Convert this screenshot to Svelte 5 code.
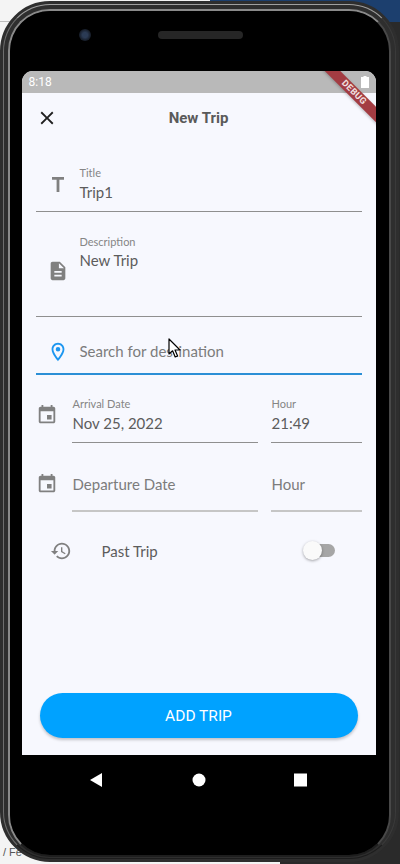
<script>
  const icons = {
    close: 'M19 6.41L17.59 5 12 10.59 6.41 5 5 6.41 10.59 12 5 17.59 6.41 19 12 13.41 17.59 19 19 17.59 13.41 12z',
    title: 'M6 4v2.8h4.6V19h2.8V6.8H18V4z',
    doc: 'M14 2H6c-1.1 0-1.99.9-1.99 2L4 20c0 1.1.89 2 1.99 2H18c1.1 0 2-.9 2-2V8l-6-6zm2 16H8v-2h8v2zm0-4H8v-2h8v2zm-3-5V3.5L18.5 9H13z',
    pin: 'M12 2C8.13 2 5 5.13 5 9c0 5.25 7 13 7 13s7-7.75 7-13c0-3.87-3.13-7-7-7zM7 9c0-2.76 2.24-5 5-5s5 2.24 5 5c0 2.88-2.88 7.19-5 9.88C9.92 16.21 7 11.85 7 9zm5-2.5a2.5 2.5 0 1 0 0 5 2.5 2.5 0 0 0 0-5z',
    event: 'M17 12h-5v5h5v-5zM16 1v2H8V1H6v2H5c-1.11 0-1.99.9-1.99 2L3 19c0 1.1.89 2 2 2h14c1.1 0 2-.9 2-2V5c0-1.1-.9-2-2-2h-1V1h-2zm3 18H5V8h14v11z',
    history: 'M13 3c-4.97 0-9 4.03-9 9H1l3.89 3.89.07.14L9 12H6c0-3.87 3.13-7 7-7s7 3.13 7 7-3.13 7-7 7c-1.93 0-3.68-.79-4.94-2.06l-1.42 1.42C8.27 19.99 10.51 21 13 21c4.97 0 9-4.03 9-9s-4.03-9-9-9zm-1 5v5l4.28 2.54.72-1.21-3.5-2.08V8H12z'
  };
</script>

<div class="stage">
  <div class="backdrop-top"></div>
  <div class="backdrop-line"></div>
  <div class="backdrop-right"></div>
  <div class="backdrop-bottom"></div>
  <span class="backdrop-text">/ Fe</span>

  <div class="phone">
    <div class="shell">
      <div class="ring">
        <div class="face">
          <div class="earpiece">
            <span class="camera"></span>
            <span class="speaker"></span>
          </div>

          <div class="screen">
            <div class="status">
              <span class="clock">8:18</span>
              <svg class="battery" width="8" height="12" viewBox="0 0 8 12"><path d="M2.5 0h3v1H8v11H0V1h2.5z" fill="#fff" /></svg>
            </div>

            <div class="ribbon">DEBUG</div>

            <header class="bar">
              <svg class="close" width="22" height="22" viewBox="0 0 24 24"><path d={icons.close} /></svg>
              <h1>New Trip</h1>
            </header>

            <form class="form">
              <div class="field title">
                <div class="slot"><svg class="ico" width="24" height="24" viewBox="0 0 24 24"><path d={icons.title} /></svg></div>
                <div class="text"><span class="label">Title</span><span class="value">Trip1</span></div>
              </div>

              <div class="field desc">
                <div class="slot"><svg class="ico" width="22" height="22" viewBox="0 0 24 24"><path d={icons.doc} /></svg></div>
                <div class="text"><span class="label">Description</span><span class="value up">New Trip</span></div>
              </div>

              <div class="field search">
                <div class="slot"><svg class="ico blue" width="22" height="22" viewBox="0 0 24 24"><path d={icons.pin} /></svg></div>
                <div class="text"><span class="value hint">Search for destination</span></div>
              </div>

              <div class="dates arrival">
                <div class="dslot"><svg class="ico" width="22" height="22" viewBox="0 0 24 24"><path d={icons.event} /></svg></div>
                <div class="cell wide"><span class="label">Arrival Date</span><span class="value">Nov 25, 2022</span></div>
                <div class="cell narrow"><span class="label">Hour</span><span class="value">21:49</span></div>
              </div>

              <div class="dates departure">
                <div class="dslot"><svg class="ico" width="22" height="22" viewBox="0 0 24 24"><path d={icons.event} /></svg></div>
                <div class="cell wide"><span class="value hint">Departure Date</span></div>
                <div class="cell narrow"><span class="value hint">Hour</span></div>
              </div>

              <div class="past">
                <svg class="ico" width="22" height="22" viewBox="0 0 24 24"><path d={icons.history} /></svg>
                <span class="past-label">Past Trip</span>
                <span class="switch"><span class="thumb"></span></span>
              </div>
            </form>

            <button class="add" type="button">ADD TRIP</button>
          </div>

          <svg class="nav" width="354" height="30" viewBox="0 0 354 30">
            <path d="M68 9l12-7v14z" fill="#fff" />
            <circle cx="177" cy="9" r="6.5" fill="#fff" />
            <rect x="272" y="2.5" width="13" height="13" fill="#fff" />
          </svg>
        </div>
      </div>
    </div>
  </div>

  <svg class="cursor" width="14" height="21" viewBox="0 0 14 21">
    <path d="M1 1v15l3.6-3.2 2.6 6.2 2.4-1-2.6-6H12z" fill="#fff" stroke="#000" stroke-width="1.2" stroke-linejoin="round" />
  </svg>
</div>

<style>
  :global(html), :global(body) { margin: 0; background: #f4f4f4; overflow: hidden; }

  .stage {
    position: relative;
    width: 400px;
    height: 864px;
    overflow: hidden;
    background: #f4f4f4;
    font-family: "Lato", "Open Sans", sans-serif;
    padding: 1px 1px 0 0;
    box-sizing: border-box;
  }
  .backdrop-top { position: absolute; left: 210px; top: 0; right: 0; height: 22px; background: #1c3f6e; }
  .backdrop-line { position: absolute; left: 0; top: 21px; width: 30px; height: 1px; background: #bdbdbd; }
  .backdrop-right { position: absolute; left: 380px; top: 22px; right: 0; bottom: 0; background: #2a2a2a; }
  .backdrop-bottom { position: absolute; left: 280px; top: 800px; right: 0; bottom: 0; background: #2a2a2a; }
  .backdrop-text { position: absolute; left: 3px; top: 846px; font: 11px "Liberation Sans", sans-serif; color: #555; }

  .phone {
    position: relative;
    height: 861px;
    box-sizing: border-box;
    border: 3px solid #2e2e2e;
    border-radius: 50px;
    background: #2e2e2e;
  }
  .shell {
    height: 100%;
    box-sizing: border-box;
    padding: 3.5px 4px 1px 3.5px;
    border: 1.5px solid;
    border-color: #a0a0a0 #3a3a3a #1c1c1c #6e6e6e;
    border-radius: 47px;
  }
  .ring {
    height: 100%;
    box-sizing: border-box;
    border: 2px solid;
    border-color: #8a8a8a #484848 #1e1e1e #8a8a8a;
    border-radius: 42px;
    overflow: hidden;
    background: #000;
  }
  .face { height: 100%; background: #000; display: flex; flex-direction: column; padding-left: 12px; }

  .earpiece {
    height: 60px;
    box-sizing: border-box;
    padding: 18px 0 0 57px;
    display: flex;
    align-items: flex-start;
    flex: none;
  }
  .camera {
    width: 12px; height: 12px; border-radius: 50%;
    background: radial-gradient(circle, #2b3b55 0 30%, #1a2230 60%, #10141c 100%);
    margin-right: 67px;
  }
  .speaker { width: 85px; height: 8px; margin-top: 2px; border-radius: 4px; background: #262626; }

  .screen {
    position: relative;
    width: 354px;
    height: 684px;
    flex: none;
    overflow: hidden;
    display: flex;
    flex-direction: column;
    border-radius: 11px 11px 0 0;
    background: #f7f8fe;
  }
  .status {
    height: 22px;
    flex: none;
    background: #b9b9b9;
    display: flex;
    align-items: center;
    justify-content: space-between;
    padding: 0 7px;
    box-sizing: border-box;
  }
  .clock { font: 12px "Roboto", sans-serif; color: #fff; }
  .battery { margin-top: 1px; }

  .ribbon {
    position: absolute;
    left: 282px;
    top: 16px;
    width: 100px;
    height: 11px;
    text-align: center;
    transform: rotate(45deg);
    background: #a33c42;
    color: #f3e3e3;
    font: 700 9px/11px "Roboto", sans-serif;
    letter-spacing: 0.4px;
    box-shadow: 0 1px 3px rgba(0,0,0,.25);
  }

  .bar {
    position: relative;
    height: 50px;
    flex: none;
    display: flex;
    align-items: center;
    justify-content: center;
  }
  .close { position: absolute; left: 14px; top: 14px; fill: #1f1f1f; }
  h1 { margin: 0; font: 700 15px "Roboto", sans-serif; color: #5a5a5a; }

  .form { padding: 0 14px; display: flex; flex-direction: column; }
  .field { display: flex; border-bottom: 1px solid #8f8f8f; }
  .slot { width: 44px; flex: none; display: flex; justify-content: center; }
  .text, .cell { display: flex; flex-direction: column; }
  .ico { fill: #808080; display: block; }
  .ico.blue { fill: #1c96f0; }

  .label { font-size: 11px; line-height: 14px; color: #858585; margin-bottom: 2px; }
  .value { font-size: 15px; line-height: 20px; color: #5c5c5c; }
  .value.up { margin-top: -1px; }
  .hint { color: #7c7c7c; }

  .title { margin-top: 23px; padding-bottom: 9px; }
  .title .ico { margin-top: 7px; }
  .desc { margin-top: 23px; padding-bottom: 34px; }
  .desc .ico { margin-top: 25px; }
  .search { margin-top: 24px; padding-bottom: 10px; border-bottom: 2px solid #2b8fd6; }

  .dates { display: flex; gap: 13px; }
  .dslot { width: 36px; flex: none; margin-right: -13px; }
  .cell { border-bottom: 1px solid #8f8f8f; padding-bottom: 9px; box-sizing: border-box; padding-left: 1px; }
  .wide { width: 186px; }
  .narrow { width: 91px; }
  .arrival { margin-top: 22px; }
  .arrival .ico { margin-top: 7px; }
  .departure { margin-top: 31px; }
  .departure .ico { margin-top: -1px; }
  .departure .cell { padding-bottom: 16px; border-bottom: 2px solid #c6c6c6; }

  .past { margin-top: 29px; display: flex; align-items: center; height: 20px; padding-left: 14px; }
  .past-label { margin-left: 30px; font-size: 15px; line-height: 20px; color: #5c5c5c; }
  .switch {
    position: relative;
    width: 30px; height: 13px;
    margin-left: auto;
    margin-right: 27px;
    border-radius: 7px;
    background: #a6a6a6;
  }
  .thumb {
    position: absolute;
    left: -2px; top: -3px;
    width: 19px; height: 19px;
    border-radius: 50%;
    background: #fafafa;
    box-shadow: 0 1px 3px rgba(0,0,0,.35);
  }

  .add {
    margin: auto 18px 17px;
    height: 45px;
    padding-top: 3px;
    flex: none;
    border: 0;
    border-radius: 23px;
    background: #00a2ff;
    color: #fff;
    font: 400 15.5px "Roboto", sans-serif;
    box-shadow: 0 2px 3px rgba(0,0,0,.22);
  }

  .nav { display: block; margin-top: 16px; flex: none; }

  .cursor { position: absolute; left: 168px; top: 338px; }
</style>
